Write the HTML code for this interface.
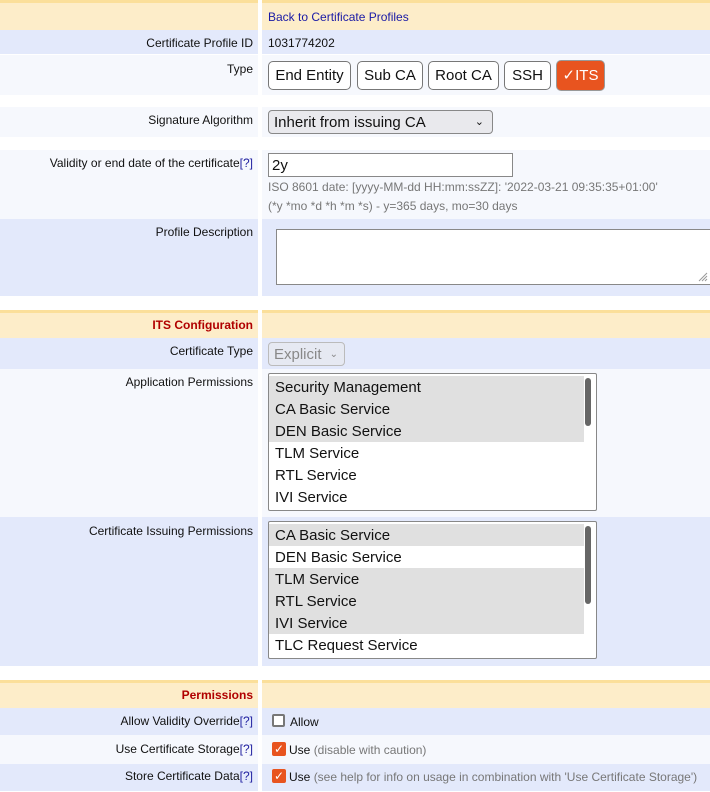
<!DOCTYPE html>
<html><head><style>
*{margin:0;padding:0;box-sizing:border-box}
body{width:710px;height:792px;position:relative;background:#fff;font-family:"Liberation Sans",sans-serif;font-size:12px;color:#111;overflow:hidden}
.l,.r{position:absolute}
.l{left:0;width:258px;text-align:right;padding-right:5px}
.r{left:262px;width:448px;padding-left:6px}
.h{background:#fdedc9;border-top:3px solid #fbdf9a}
.b{background:#e3e9fb}
.w{background:#f6f8fd}
.t{position:absolute;font-size:12px}
.lab{position:absolute;right:457px;text-align:right;white-space:nowrap}
.q{color:#2020a0}
.btn{position:absolute;top:61px;height:29px;border:1px solid #777;border-radius:5px;background:#fff;font-size:15px;line-height:27px;text-align:center}
.sel{position:absolute;border:1px solid #888;border-radius:4px;background:#e9e9ed;font-size:15px}
.list{position:absolute;left:268px;width:329px;border:1px solid #888;background:#fff;font-size:15px;border-radius:2px}
.list div{height:22px;line-height:24px;padding-left:6px;width:315px}
.list .s{background:#e0e0e0}
.sb{position:absolute;right:5px;top:4px;width:6px;height:48px;background:#666;border-radius:3px}
.cb{position:absolute;width:14px;height:14px;border-radius:2px}
.g{color:#777}
</style></head><body>
<div class="l h" style="top:0;height:30px"></div>
<div class="r h" style="top:0;height:30px"></div>
<div class="t" style="left:268px;top:10px;color:#1a1aa6">Back to Certificate Profiles</div>

<div class="l b" style="top:30px;height:24px"></div><div class="r b" style="top:30px;height:24px"></div>
<div class="lab" style="top:36px">Certificate Profile ID</div>
<div class="t" style="left:268px;top:36px">1031774202</div>

<div class="l w" style="top:55px;height:40px"></div><div class="r w" style="top:55px;height:40px"></div>
<div class="lab" style="top:62px">Type</div>
<div class="btn" style="left:268px;width:83px">End Entity</div>
<div class="btn" style="left:357px;width:66px">Sub CA</div>
<div class="btn" style="left:428px;width:71px">Root CA</div>
<div class="btn" style="left:504px;width:47px">SSH</div>
<div class="btn" style="left:556px;width:49px;top:60px;height:31px;background:#e8541f;color:#fff;border-color:#999;line-height:29px">✓ITS</div>

<div class="l w" style="top:107px;height:30px"></div><div class="r w" style="top:107px;height:30px"></div>
<div class="lab" style="top:113px">Signature Algorithm</div>
<div class="sel" style="left:268px;top:110px;width:225px;height:24px;line-height:23px;padding-left:5px">Inherit from issuing CA<span style="position:absolute;right:8px;top:0;font-size:11px">&#8964;</span></div>

<div class="l w" style="top:150px;height:69px"></div><div class="r w" style="top:150px;height:69px"></div>
<div class="lab" style="top:156px">Validity or end date of the certificate<span class="q">[?]</span></div>
<div style="position:absolute;left:268px;top:153px;width:245px;height:24px;border:1px solid #888;background:#fff;font-size:15px;line-height:23px;padding-left:3px">2y</div>
<div class="t g" style="left:268px;top:180px">ISO 8601 date: [yyyy-MM-dd HH:mm:ssZZ]: '2022-03-21 09:35:35+01:00'</div>
<div class="t g" style="left:268px;top:199px">(*y *mo *d *h *m *s) - y=365 days, mo=30 days</div>

<div class="l b" style="top:219px;height:77px"></div><div class="r b" style="top:219px;height:77px"></div>
<div class="lab" style="top:225px">Profile Description</div>
<div style="position:absolute;left:276px;top:229px;width:434px;height:56px;border:1px solid #888;border-right:none;background:#fff">
<svg width="10" height="10" style="position:absolute;right:2px;bottom:2px" viewBox="0 0 10 10"><path d="M9 1L1 9M9 4L4 9M9 7L7 9" stroke="#999" stroke-width="1"/></svg></div>

<div class="l h" style="top:310px;height:28px"></div><div class="r h" style="top:310px;height:28px"></div>
<div class="lab" style="top:318px;color:#b00000;font-weight:bold">ITS Configuration</div>

<div class="l b" style="top:338px;height:31px"></div><div class="r b" style="top:338px;height:31px"></div>
<div class="lab" style="top:344px">Certificate Type</div>
<div class="sel" style="left:268px;top:342px;width:77px;height:24px;line-height:23px;padding-left:5px;color:#888;background:#e6e9f2;border-color:#bbb">Explicit<span style="position:absolute;right:6px;font-size:10px">&#8964;</span></div>

<div class="l w" style="top:369px;height:148px"></div><div class="r w" style="top:369px;height:148px"></div>
<div class="lab" style="top:375px">Application Permissions</div>
<div class="list" style="top:373px;height:138px;padding-top:2px">
<div class="s">Security Management</div><div class="s">CA Basic Service</div><div class="s">DEN Basic Service</div><div>TLM Service</div><div>RTL Service</div><div>IVI Service</div>
<span class="sb"></span></div>

<div class="l b" style="top:517px;height:149px"></div><div class="r b" style="top:517px;height:149px"></div>
<div class="lab" style="top:524px">Certificate Issuing Permissions</div>
<div class="list" style="top:521px;height:138px;padding-top:2px">
<div class="s">CA Basic Service</div><div>DEN Basic Service</div><div class="s">TLM Service</div><div class="s">RTL Service</div><div class="s">IVI Service</div><div>TLC Request Service</div>
<span class="sb" style="height:78px"></span></div>

<div class="l h" style="top:680px;height:28px"></div><div class="r h" style="top:680px;height:28px"></div>
<div class="lab" style="top:688px;color:#b00000;font-weight:bold">Permissions</div>

<div class="l b" style="top:708px;height:27px"></div><div class="r b" style="top:708px;height:27px"></div>
<div class="lab" style="top:714px">Allow Validity Override<span class="q">[?]</span></div>
<div class="cb" style="left:272px;top:714px;border:2px solid #777;background:#fff;width:13px;height:13px"></div>
<div class="t" style="left:290px;top:715px">Allow</div>

<div class="l w" style="top:735px;height:29px"></div><div class="r w" style="top:735px;height:29px"></div>
<div class="lab" style="top:742px">Use Certificate Storage<span class="q">[?]</span></div>
<div class="cb" style="left:272px;top:742px;background:#e8541f;color:#fff;font-size:12px;line-height:14px;text-align:center">✓</div>
<div class="t" style="left:289px;top:743px">Use <span class="g">(disable with caution)</span></div>

<div class="l b" style="top:764px;height:27px"></div><div class="r b" style="top:764px;height:27px"></div>
<div class="lab" style="top:769px">Store Certificate Data<span class="q">[?]</span></div>
<div class="cb" style="left:272px;top:769px;background:#e8541f;color:#fff;font-size:12px;line-height:14px;text-align:center">✓</div>
<div class="t" style="left:289px;top:770px">Use <span class="g">(see help for info on usage in combination with 'Use Certificate Storage')</span></div>
</body></html>
